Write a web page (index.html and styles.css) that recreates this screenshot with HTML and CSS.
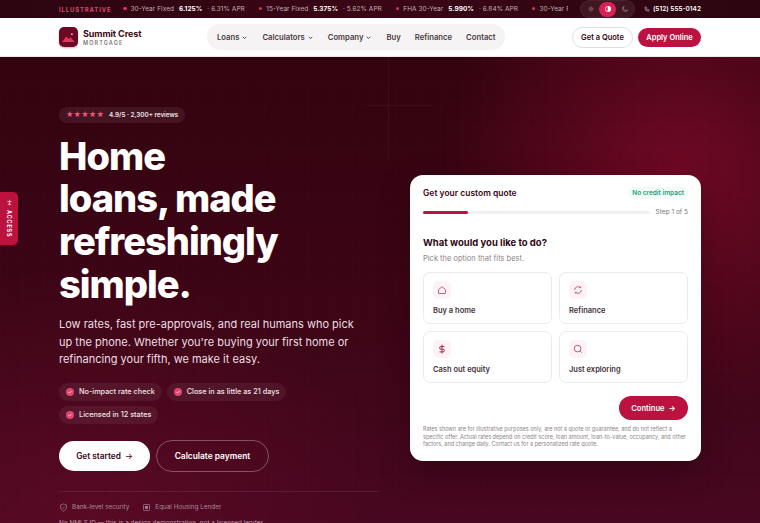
FILE: index.html
```html
<!DOCTYPE html>
<html lang="en">
<head>
<meta charset="utf-8">
<title>Summit Crest Mortgage</title>
<link rel="stylesheet" href="styles.css">
</head>
<body>
<div class="topbar">
  <div class="ticker">
    <span class="ticker-label">ILLUSTRATIVE</span>
    <span class="rate"><i class="dot"></i>30-Year Fixed <b>6.125%</b> · 6.31% APR</span>
    <span class="rate"><i class="dot"></i>15-Year Fixed <b>5.375%</b> · 5.62% APR</span>
    <span class="rate"><i class="dot"></i>FHA 30-Year <b>5.990%</b> · 6.84% APR</span>
    <span class="rate"><i class="dot"></i>30-Year Fixed <b>6.125%</b> · 6.31% APR</span>
  </div>
  <div class="theme">
    <span class="theme-btn"><svg viewBox="0 0 24 24" class="ti"><circle cx="12" cy="12" r="4"/><path d="M12 3v2M12 19v2M3 12h2M19 12h2M5.6 5.6l1.4 1.4M17 17l1.4 1.4M5.6 18.4L7 17M17 7l1.4-1.4"/></svg></span>
    <span class="theme-btn on"><svg viewBox="0 0 24 24" class="ti"><circle cx="12" cy="12" r="8"/><path d="M12 4a8 8 0 0 1 0 16z" fill="currentColor"/></svg></span>
    <span class="theme-btn"><svg viewBox="0 0 24 24" class="ti"><path d="M20 14.5A8 8 0 1 1 9.5 4a6.5 6.5 0 0 0 10.5 10.500z"/></svg></span>
  </div>
  <a class="phone"><svg viewBox="0 0 24 24" class="pi"><path d="M5 4h4l2 5-2.500 1.500a11 11 0 0 0 5 5L15 13l5 2v4a2 2 0 0 1-2 2A15 15 0 0 1 3 6a2 2 0 0 1 2-2z"/></svg>(512) 555-0142</a>
</div>

<header class="header">
  <div class="brand">
    <span class="logo"><svg viewBox="0 0 20 20" width="20" height="20"><path d="M1.500 16 L7 8.500 L10 12 L12.500 9.500 L18.500 16z" fill="#e8325f"/><circle cx="14.500" cy="5.500" r="1.300" fill="#f6a5b8"/></svg></span>
    <span class="brand-text"><strong>Summit Crest</strong><small>MORTGAGE</small></span>
  </div>
  <nav class="nav">
    <a>Loans<svg viewBox="0 0 10 10" class="chev"><path d="M2.500 4l2.500 2.500L7.500 4"/></svg></a>
    <a>Calculators<svg viewBox="0 0 10 10" class="chev"><path d="M2.500 4l2.500 2.500L7.500 4"/></svg></a>
    <a>Company<svg viewBox="0 0 10 10" class="chev"><path d="M2.500 4l2.500 2.500L7.500 4"/></svg></a>
    <a>Buy</a>
    <a>Refinance</a>
    <a>Contact</a>
  </nav>
  <div class="actions">
    <a class="btn-ghost">Get a Quote</a>
    <a class="btn-solid">Apply Online</a>
  </div>
</header>

<a class="access"><svg viewBox="0 0 12 12" class="access-ic"><path d="M6 1.500v9M2 4.500h8M6 7L3.500 10.500M6 7l2.500 3.500"/></svg><span>ACCESS</span></a>

<main class="hero">
  <div class="grid-mark"></div>
  <section class="left">
    <div class="reviews"><span class="stars">★★★★★</span><span>4.9/5 · 2,300+ reviews</span></div>
    <h1>Home<br>loans, made<br>refreshingly<br>simple.</h1>
    <p class="lead">Low rates, fast pre-approvals, and real humans who pick up the phone. Whether you're buying your first home or refinancing your fifth, we make it easy.</p>
    <div class="chips">
      <span class="chip"><i class="tick"><svg viewBox="0 0 10 10"><path d="M2.500 5.200l1.700 1.700 3.300-3.600"/></svg></i>No-impact rate check</span>
      <span class="chip"><i class="tick"><svg viewBox="0 0 10 10"><path d="M2.500 5.200l1.700 1.700 3.300-3.600"/></svg></i>Close in as little as 21 days</span>
      <span class="chip"><i class="tick"><svg viewBox="0 0 10 10"><path d="M2.500 5.200l1.700 1.700 3.300-3.600"/></svg></i>Licensed in 12 states</span>
    </div>
    <div class="cta">
      <a class="cta-main">Get started <span class="arrow">→</span></a>
      <a class="cta-alt">Calculate payment</a>
    </div>
    <div class="trust">
      <div class="trust-row">
        <span><svg viewBox="0 0 24 24" class="tr-ic"><path d="M12 2.500l8 3v6c0 5-3.500 8.500-8 10-4.500-1.500-8-5-8-10v-6z"/><path d="M8.500 12l2.500 2.500 4.500-5"/></svg>Bank-level security</span>
        <span><svg viewBox="0 0 24 24" class="tr-ic"><rect x="4" y="4" width="16" height="16" rx="2"/><rect x="9" y="9" width="6" height="6" fill="currentColor"/></svg>Equal Housing Lender</span>
      </div>
      <p class="note">No NMLS ID — this is a design demonstration, not a licensed lender.</p>
    </div>
  </section>

  <section class="card">
    <div class="card-top">
      <span class="card-title">Get your custom quote</span>
      <span class="badge">No credit impact</span>
    </div>
    <div class="progress-row">
      <div class="track"><div class="fill"></div></div>
      <span class="step">Step 1 of 5</span>
    </div>
    <h2>What would you like to do?</h2>
    <p class="sub">Pick the option that fits best.</p>
    <div class="options">
      <div class="opt"><span class="opt-ic"><svg viewBox="0 0 24 24"><path d="M3.500 11.500L12 4l8.500 7.500V19a1.500 1.500 0 0 1-1.500 1.500H5A1.500 1.500 0 0 1 3.500 19z"/></svg></span><span>Buy a home</span></div>
      <div class="opt"><span class="opt-ic"><svg viewBox="0 0 24 24"><path d="M20 12a8 8 0 0 1-13.500 5.800M4 12a8 8 0 0 1 13.500-5.800"/><path d="M18.500 3.500v3h-3M5.500 20.500v-3h3"/></svg></span><span>Refinance</span></div>
      <div class="opt"><span class="opt-ic"><svg class="ic-bold" viewBox="0 0 24 24"><path d="M12 1.500v21M17.500 6H9.500a3.200 3.200 0 0 0 0 6.500h5a3.200 3.200 0 0 1 0 6.500H6"/></svg></span><span>Cash out equity</span></div>
      <div class="opt"><span class="opt-ic"><svg viewBox="0 0 24 24"><circle cx="11" cy="11" r="8"/><path d="M17 17l4 4"/></svg></span><span>Just exploring</span></div>
    </div>
    <div class="continue-row"><a class="continue">Continue <span>→</span></a></div>
    <p class="fine">Rates shown are for illustrative purposes only, are not a quote or guarantee, and do not reflect a specific offer. Actual rates depend on credit score, loan amount, loan-to-value, occupancy, and other factors, and change daily. Contact us for a personalized rate quote.</p>
  </section>
</main>
</body>
</html>
```
FILE: styles.css
```css
* { box-sizing: border-box; }
html, body { margin: 0; height: 523px; overflow: hidden; }
body { font-family: Inter, "Liberation Sans", sans-serif; color: #2b0a14; background: #33030f; position: relative; }
a { text-decoration: none; }

.topbar { height: 18px; display: flex; align-items: center; padding: 0 59px; background: linear-gradient(90deg, #2c0510, #3a0616 50%, #2c0510); color: #cdbcc1; font-size: 6.500px; }
.ticker { width: 509px; flex: none; display: flex; align-items: center; gap: 14px; overflow: hidden; white-space: nowrap; }
.ticker-label { color: #e0466f; font-weight: 700; letter-spacing: .95px; font-size: 5.800px; flex: none; width: 50px; }
.rate { flex: none; letter-spacing: .05px; color: #c3aeb5; }
.rate b { color: #fff; font-weight: 700; margin: 0 3px; }
.dot { display: inline-block; width: 3.500px; height: 3.500px; border-radius: 50%; background: #e0325f; margin-right: 4px; vertical-align: 1px; }
.theme { flex: none; width: 55px; height: 18px; margin-left: 12px; display: flex; align-items: center; justify-content: space-between; padding: 1px 2px; border-radius: 9px; background: rgba(255,255,255,.07); box-shadow: inset 0 0 0 1px rgba(255,255,255,.05); }
.theme-btn { width: 17px; height: 15px; border-radius: 8px; display: flex; align-items: center; justify-content: center; color: #9d868e; }
.theme-btn.on { background: #d91f55; color: #fff; }
.ti { width: 8px; height: 8px; fill: none; stroke: currentColor; stroke-width: 2; }
.phone { margin-left: auto; flex: none; display: flex; align-items: center; gap: 3px; color: #fff; font-size: 6.500px; font-weight: 600; }
.pi { width: 6px; height: 6px; fill: none; stroke: #d8c8cd; stroke-width: 2.200; }

.header { height: 39px; background: #fff; display: flex; align-items: center; padding: 0 59px; border-bottom: 1px solid #f2e8ea; }
.brand { display: flex; align-items: center; gap: 5px; width: 148px; flex: none; }
.logo { width: 19px; height: 20px; border-radius: 5px; background: #6b0a24; display: flex; align-items: center; justify-content: center; box-shadow: 0 1px 2px rgba(90,0,30,.3); }
.logo svg { width: 15px; height: 15px; }
.brand-text { display: flex; flex-direction: column; }
.brand-text strong { font-size: 9px; line-height: 11px; font-weight: 700; color: #3a0716; letter-spacing: -.1px; }
.brand-text small { font-size: 5.500px; line-height: 8px; font-weight: 600; color: #7f7479; letter-spacing: 1.100px; }
.nav { height: 26px; display: flex; align-items: center; gap: 14px; padding: 0 10px; border-radius: 13px; background: #f5f3f4; font-size: 7.700px; font-weight: 600; color: #4b3a40; }
.nav a { display: flex; align-items: center; gap: 2px; }
.chev { width: 7px; height: 7px; fill: none; stroke: #4b3a40; stroke-width: 1.300; }
.actions { margin-left: auto; display: flex; align-items: center; gap: 5px; }
.btn-ghost { height: 21px; width: 61px; justify-content: center; display: flex; align-items: center; border-radius: 11px; border: 1px solid #e2dcde; font-size: 7.500px; font-weight: 600; color: #3a0716; background: #fff; }
.btn-solid { height: 19px; width: 63px; justify-content: center; display: flex; align-items: center; border-radius: 10px; background: #bb123f; font-size: 7.500px; font-weight: 600; color: #fff; }

.access { position: absolute; left: 0; top: 192px; width: 18px; height: 53px; z-index: 3; background: #bb123f; border-radius: 0 5px 5px 0; display: flex; flex-direction: column; align-items: center; gap: 4px; padding-top: 7px; color: #fff; }
.access-ic { width: 7px; height: 7px; fill: none; stroke: #f5c9d4; stroke-width: 1.300; }
.access span { writing-mode: vertical-rl; font-size: 5.500px; font-weight: 700; letter-spacing: .8px; }

.hero { position: relative; height: 466px; padding: 50px 59px 0; display: flex; justify-content: space-between; overflow: hidden;
  background:
    repeating-linear-gradient(90deg, rgba(255,255,255,.006) 0 1px, transparent 1px 22px),
    repeating-linear-gradient(0deg, rgba(255,255,255,.006) 0 1px, transparent 1px 22px),
    radial-gradient(240px 240px at 680px 115px, rgba(125,10,40,.8), rgba(125,10,40,0) 100%),
    radial-gradient(300px 260px at 90px 470px, rgba(110,12,40,.48), rgba(110,12,40,0) 100%),
    linear-gradient(180deg, #33030f, #3e0517 60%, #470720);
}
.grid-mark { position: absolute; left: 367px; top: 0; width: 65px; height: 49px; border-bottom: 1px solid rgba(255,255,255,.04); }
.grid-mark::before { content: ""; position: absolute; left: 21px; top: 0; width: 1px; height: 102px; background: rgba(255,255,255,.04); }

.left { width: 320px; position: relative; color: #fff; }
.reviews { display: flex; width: fit-content; align-items: center; gap: 5px; height: 16px; padding: 0 7px; border-radius: 8px; background: rgba(255,255,255,.07); font-size: 6.300px; font-weight: 600; color: #f1e4e8; }
.stars { color: #e6597f; font-size: 7.200px; letter-spacing: .1px; line-height: 1; }
h1 { margin: 11.500px 0 0; font-size: 38px; line-height: 42.700px; font-weight: 800; letter-spacing: -1px; color: #fff; }
.lead { margin: 11px 0 0; font-size: 11px; line-height: 17.500px; color: #ecdfe3; width: 300px; }
.chips { margin-top: 14px; display: flex; flex-wrap: wrap; gap: 5px; }
.chip { height: 18px; display: inline-flex; align-items: center; gap: 5px; padding: 0 7px; border-radius: 9px; background: rgba(255,255,255,.06); font-size: 7.300px; color: #efe3e6; font-weight: 500; }
.tick { width: 8px; height: 8px; border-radius: 50%; background: #e2456f; display: flex; align-items: center; justify-content: center; }
.tick svg { width: 6px; height: 6px; fill: none; stroke: #fff; stroke-width: 1.200; }
.cta { margin-top: 16px; display: flex; align-items: center; gap: 6px; }
.cta-main { height: 30px; width: 91px; border-radius: 15px; background: #fff; color: #3a0716; font-size: 8.300px; font-weight: 600; display: flex; align-items: center; justify-content: center; gap: 4px; }
.arrow { font-weight: 500; }
.cta-alt { height: 32px; width: 113px; border-radius: 16px; border: 1px solid rgba(255,255,255,.3); color: #fff; font-size: 8.400px; font-weight: 600; display: flex; align-items: center; justify-content: center; }
.trust { margin-top: 19px; padding-top: 11px; border-top: 1px solid rgba(255,255,255,.08); }
.trust-row { display: flex; gap: 13px; font-size: 6.350px; color: #a98b95; }
.trust-row span { display: flex; align-items: center; gap: 4px; }
.tr-ic { width: 9px; height: 9px; fill: none; stroke: currentColor; stroke-width: 1.800; }
.note { margin: 7px 0 0; font-size: 6.400px; color: #b89aa4; white-space: nowrap; }

.card { align-self: flex-start; margin-top: 68px; width: 291px; height: 286px; flex: none; background: #fff; border-radius: 13px; padding: 11px 13px 0; box-shadow: 0 12px 30px rgba(30,0,10,.35); }
.card-top { display: flex; justify-content: space-between; align-items: center; height: 13px; }
.card-title { font-size: 8.500px; font-weight: 600; color: #3a0716; }
.badge { height: 12px; padding: 0 4px; display: flex; align-items: center; font-size: 6.500px; font-weight: 600; color: #1fa27b; background: #f2fbf8; border-radius: 6px; }
.progress-row { margin-top: 8px; display: flex; align-items: center; gap: 6px; height: 10px; }
.track { flex: 1; height: 3px; border-radius: 2px; background: #f3f0f1; }
.fill { width: 20%; height: 100%; border-radius: 2px; background: #bb123f; }
.step { font-size: 6.500px; color: #7e7378; }
h2 { margin: 19px 0 0; font-size: 9.500px; line-height: 14px; font-weight: 700; color: #2e0712; }
.sub { margin: 4px 0 0; font-size: 7.500px; line-height: 10px; color: #8c8287; }
.options { margin-top: 8px; display: grid; grid-template-columns: 129px 129px; gap: 7px; }
.opt { height: 52px; border: 1px solid #eeeaeb; border-radius: 7px; padding: 8px 9px 0; display: flex; flex-direction: column; gap: 7px; font-size: 7.500px; font-weight: 600; color: #43303a; background: #fff; }
.opt-ic { width: 18px; height: 18px; border-radius: 5px; background: #fdf3f6; display: flex; align-items: center; justify-content: center; color: #ab2a52; }
.opt-ic svg { width: 10px; height: 10px; fill: none; stroke: currentColor; stroke-width: 1.800; }
.opt-ic .ic-bold { stroke-width: 2.400; }
.continue-row { margin-top: 13px; display: flex; justify-content: flex-end; }
.continue { width: 69px; height: 24px; border-radius: 12px; background: #bb123f; color: #fff; font-size: 7.600px; font-weight: 600; display: flex; align-items: center; justify-content: center; gap: 4px; }
.fine { margin: 6px 0 0; font-size: 5.500px; line-height: 7.500px; color: #8d8388; }
```
